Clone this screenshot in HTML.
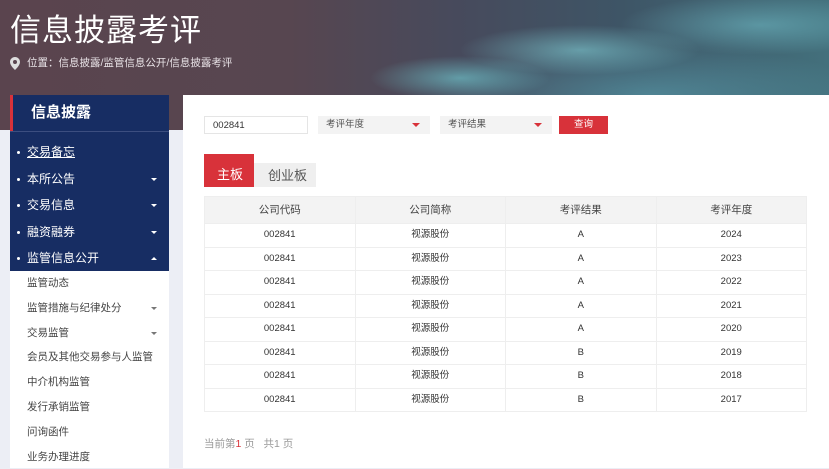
<!DOCTYPE html>
<html><head><meta charset="utf-8"><style>
*{margin:0;padding:0;box-sizing:border-box}
body{width:829px;height:468px;overflow:hidden;background:#eceef5;font-family:"Liberation Sans","Noto Sans CJK SC",sans-serif;position:relative}
.hdr{position:absolute;left:0;top:0;width:829px;height:130px;
background:
radial-gradient(ellipse 120px 25px at 580px 50px,rgba(140,230,235,.5),transparent),
radial-gradient(ellipse 90px 22px at 460px 78px,rgba(120,220,225,.55),transparent),
radial-gradient(ellipse 140px 30px at 760px 25px,rgba(130,220,230,.4),transparent),
radial-gradient(ellipse 220px 50px at 650px 95px,rgba(90,160,175,.6),transparent),
linear-gradient(90deg,#5a444e 0%,#574650 35%,#474a5c 55%,#3e5566 75%,#43707c 100%)}
.title{position:absolute;left:10px;top:11px;color:#fff;font-size:31px;letter-spacing:1px;line-height:40px}
.loc{position:absolute;left:27px;top:56px;color:#e8e2e6;font-size:10.5px;line-height:14px}
.pin{position:absolute;left:10px;top:57px}
.side{position:absolute;left:10px;top:95px;width:159px;height:373px;background:#fff}
.sh{height:36px;background:#172d63;border-left:3px solid #d8323a;color:#fff;font-size:15px;font-weight:bold;padding-left:18px;line-height:36px}
.dark{background:#172d63;border-top:1px solid #3c4e80;padding-top:7px;height:140px}
.it{height:26.5px;color:#fff;font-size:12px;position:relative;padding-left:17px;line-height:26px}
.it:before{content:"";position:absolute;left:7px;top:12px;width:3px;height:3px;background:#fff;border-radius:50%}
.ar{position:absolute;right:12px;top:12px;border:3px solid transparent;border-top:3px solid #fff}
.up{top:9px;border-top-color:transparent;border-bottom:3px solid #fff}
.sub{height:24.8px;font-size:10.5px;color:#444;padding-left:17px;position:relative;line-height:24px}
.sub .ar{border-top-color:#777;top:11px}
.main{position:absolute;left:183px;top:95px;width:646px;height:373px;background:#fff}
.inp{position:absolute;top:21px;height:18px;font-size:9.5px;color:#555;padding-left:8px;line-height:17px}
.tri{position:absolute;right:10px;top:7px;border:4px solid transparent;border-top:4px solid #d8323a}
.tabs{position:absolute;left:21px;top:59px}
table{position:absolute;left:21px;top:101px;width:603px;border-collapse:collapse;font-size:9.5px;color:#333}
td,th{border:1px solid #eee;text-align:center;height:23.5px;font-weight:normal;line-height:12px;padding:0}
th{background:#f3f3f3;height:27px;font-size:10.5px;color:#444}
.pg{position:absolute;left:21px;top:341px;font-size:10.5px;color:#999}
</style></head><body>
<div class="hdr"></div>
<div class="title">信息披露考评</div>
<svg class="pin" width="10" height="13" viewBox="0 0 10 13"><path d="M5 0C2.2 0 0 2.2 0 5c0 3.5 5 8 5 8s5-4.5 5-8C10 2.2 7.8 0 5 0zm0 7a2 2 0 110-4 2 2 0 010 4z" fill="#ddd"/></svg>
<div class="loc">位置：信息披露/监管信息公开/信息披露考评</div>
<div class="side">
<div class="sh">信息披露</div>
<div class="dark">
<div class="it" style="text-decoration:underline">交易备忘</div>
<div class="it">本所公告<span class="ar"></span></div>
<div class="it">交易信息<span class="ar"></span></div>
<div class="it">融资融券<span class="ar"></span></div>
<div class="it">监管信息公开<span class="ar up"></span></div>
</div>
<div>
<div class="sub">监管动态</div>
<div class="sub">监管措施与纪律处分<span class="ar"></span></div>
<div class="sub">交易监管<span class="ar"></span></div>
<div class="sub">会员及其他交易参与人监管</div>
<div class="sub">中介机构监管</div>
<div class="sub">发行承销监管</div>
<div class="sub">问询函件</div>
<div class="sub">业务办理进度</div>
</div>
</div>
<div class="main">
<div class="inp" style="left:21px;width:104px;border:1px solid #e5e5e5;color:#333">002841</div>
<div class="inp" style="left:135px;width:112px;background:#f3f3f3">考评年度<span class="tri"></span></div>
<div class="inp" style="left:257px;width:112px;background:#f3f3f3">考评结果<span class="tri"></span></div>
<div class="inp" style="left:376px;width:49px;background:#d8323a;color:#fff;padding-left:15px">查询</div>
<div class="tabs">
<div style="position:absolute;left:0;top:0;width:50px;height:33px;background:#d8323a;color:#fff;font-size:13px;padding-left:13px;line-height:42px">主板</div>
<div style="position:absolute;left:50px;top:9px;width:62px;height:24px;background:#efefef;color:#555;font-size:13px;padding-left:14px;line-height:26px">创业板</div>
</div>
<table>
<tr><th>公司代码</th><th>公司简称</th><th>考评结果</th><th>考评年度</th></tr>
<tr><td>002841</td><td>视源股份</td><td>A</td><td>2024</td></tr>
<tr><td>002841</td><td>视源股份</td><td>A</td><td>2023</td></tr>
<tr><td>002841</td><td>视源股份</td><td>A</td><td>2022</td></tr>
<tr><td>002841</td><td>视源股份</td><td>A</td><td>2021</td></tr>
<tr><td>002841</td><td>视源股份</td><td>A</td><td>2020</td></tr>
<tr><td>002841</td><td>视源股份</td><td>B</td><td>2019</td></tr>
<tr><td>002841</td><td>视源股份</td><td>B</td><td>2018</td></tr>
<tr><td>002841</td><td>视源股份</td><td>B</td><td>2017</td></tr>
</table>
<div class="pg">当前第<span style="color:#d8323a">1</span> 页 &nbsp; 共1 页</div>
</div>
</body></html>
